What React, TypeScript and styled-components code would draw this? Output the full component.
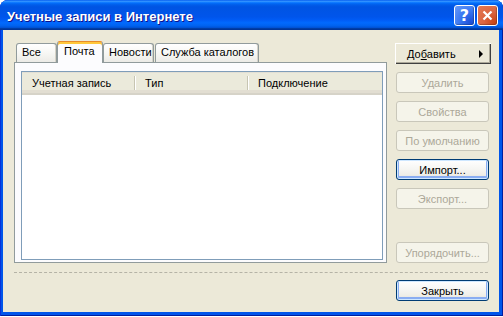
import * as React from 'react';
import styled, { createGlobalStyle } from 'styled-components';

const GlobalStyle = createGlobalStyle`
  html, body {
    margin: 0;
    padding: 0;
    background: #ffffff;
  }
  body {
    font-family: 'Liberation Sans', Tahoma, sans-serif;
    font-size: 11px;
  }
`;

const Window = styled.div`
  width: 503px;
  height: 316px;
  display: flex;
  flex-direction: column;
  background: #0055ea;
  border-radius: 8px 8px 0 0;
  box-shadow: inset 1px 0 0 #0831d9, inset -1px 0 0 #001ea0, inset 0 -1px 0 #001ea0;
`;

const TitleBar = styled.div`
  height: 30px;
  flex: none;
  display: flex;
  align-items: center;
  padding: 0 5px 0 7px;
  border-radius: 8px 8px 0 0;
  background: linear-gradient(
    180deg,
    #0058ee 0%,
    #3593ff 4%,
    #288eff 6%,
    #127dff 8%,
    #036ffc 10%,
    #0262ee 14%,
    #0057e5 20%,
    #0054e3 24%,
    #0055eb 56%,
    #005bf5 66%,
    #026afe 76%,
    #0062ef 86%,
    #0052d6 92%,
    #0040ab 94%,
    #003092 100%
  );
`;

const Title = styled.span`
  flex: 1;
  color: #ffffff;
  font-family: 'Liberation Sans', 'DejaVu Sans', sans-serif;
  font-weight: bold;
  font-size: 13px;
  text-shadow: 1px 1px #0f1089;
  padding-top: 2px;
`;

const CaptionButton = styled.div<{ $kind: 'help' | 'close' }>`
  width: 21px;
  height: 21px;
  box-sizing: border-box;
  margin-left: 2px;
  border: 1px solid #ffffff;
  border-radius: 3px;
  display: flex;
  align-items: center;
  justify-content: center;
  color: #ffffff;
  font-family: 'DejaVu Sans', sans-serif;
  font-weight: bold;
  font-size: 16px;
  background: ${(p) =>
    p.$kind === 'close'
      ? 'radial-gradient(circle at 85% 85%, #cc4616 0%, #dc6540 45%, #e37a55 100%)'
      : 'radial-gradient(circle at 85% 85%, #1d4fd8 0%, #3a78f2 50%, #6a9bf8 100%)'};
  box-shadow: inset -1px -1px 1px rgba(0, 0, 0, 0.25);
`;

const Client = styled.div`
  flex: 1;
  margin: 0 4px 4px 3px;
  background: #ece9d8;
  padding: 11px 10px 0 11px;
  display: flex;
  flex-direction: column;
`;

const TopRow = styled.div`
  height: 222px;
  display: flex;
  gap: 9px;
`;

const TabArea = styled.div`
  width: 373px;
  display: flex;
  flex-direction: column;
`;

const TabStrip = styled.div`
  height: 21px;
  display: flex;
  align-items: flex-end;
  padding-left: 2px;
  position: relative;
  z-index: 1;
`;

const Tab = styled.div<{ $w: number; $active?: boolean; $gap?: number }>`
  box-sizing: border-box;
  width: ${(p) => p.$w}px;
  height: ${(p) => (p.$active ? 22 : 19)}px;
  margin-left: ${(p) => p.$gap ?? 0}px;
  margin-bottom: ${(p) => (p.$active ? -1 : 0)}px;
  border: 1px solid #919b9c;
  border-bottom: none;
  border-radius: 3px 3px 0 0;
  padding: ${(p) => (p.$active ? '3px 0 0 6px' : '2px 0 0 5px')};
  color: #000000;
  white-space: nowrap;
  background: ${(p) =>
    p.$active ? '#fcfcfe' : 'linear-gradient(180deg, #ffffff 0%, #f7f7f4 50%, #ecebe6 100%)'};
  box-shadow: ${(p) =>
    p.$active ? 'inset 0 2px 0 #ffc83c, inset 0 1px 0 #e68b2c' : 'inset -1px 0 0 #d6d3c8'};
  border-top-color: ${(p) => (p.$active ? '#e68b2c' : '#919b9c')};
`;

const Panel = styled.div`
  flex: 1;
  box-sizing: border-box;
  border: 1px solid #919b9c;
  background: #fcfcfe;
  padding: 8px 3px 2px 6px;
  display: flex;
`;

const ListView = styled.div`
  flex: 1;
  border: 1px solid #7f9db9;
  background: #ffffff;
  display: flex;
  flex-direction: column;
`;

const Header = styled.div`
  height: 21px;
  display: flex;
  background: #ebeadb;
  border-bottom: 2px solid #d6d3c8;
  box-shadow: 0 1px 0 #e2dfd4 inset, 0 -3px 0 #e2ded2 inset;
`;

const HeaderCell = styled.div<{ $w?: number }>`
  box-sizing: border-box;
  ${(p) => (p.$w ? `width: ${p.$w}px;` : 'flex: 1;')}
  position: relative;
  padding: 5px 0 0 10px;
  color: #000000;
  white-space: nowrap;

  &::after {
    content: '';
    display: ${(p) => (p.$w ? 'block' : 'none')};
    position: absolute;
    right: 0;
    top: 4px;
    height: 14px;
    width: 1px;
    background: #c7c5b2;
    box-shadow: 1px 0 0 #ffffff;
  }
`;

const ButtonColumn = styled.div`
  width: 93px;
  padding-top: 2px;
  display: flex;
  flex-direction: column;
  gap: 8px;
`;

const Button = styled.button<{ $default?: boolean }>`
  box-sizing: border-box;
  width: 93px;
  height: 21px;
  padding: 0;
  font-family: 'Liberation Sans', Tahoma, sans-serif;
  font-size: 11px;
  color: #000000;
  border: 1px solid #003c74;
  border-radius: 3px;
  background: linear-gradient(180deg, #ffffff 0%, #f6f6f3 45%, #eeede7 80%, #d8d2c6 100%);
  box-shadow: ${(p) =>
    p.$default ? 'inset 0 0 0 1px #cee7ff, inset 0 -1px 0 2px #8aadf2' : 'none'};

  &:disabled {
    border-color: #c9c7ba;
    color: #aca899;
    background: #f5f4ea;
    box-shadow: none;
  }
`;

const PushButton = styled.div`
  box-sizing: border-box;
  width: 96px;
  height: 21px;
  margin-left: -1px;
  display: flex;
  align-items: center;
  justify-content: space-between;
  padding: 0 8px 0 12px;
  background: #ece9d8;
  color: #000000;
  box-shadow: inset 1px 1px 0 #ffffff, inset -1px -1px 0 #404040, inset -2px -2px 0 #aca899;

  u {
    text-decoration: underline;
  }
`;

const Arrow = styled.span`
  width: 0;
  height: 0;
  border-top: 4px solid transparent;
  border-bottom: 4px solid transparent;
  border-left: 4px solid #000000;
`;

const Spacer = styled.div`
  flex: 1;
  margin-top: -8px;
`;

const Separator = styled.div`
  margin: 9px 1px 0 0;
  height: 0;
  border-top: 1px dashed #b5b3a6;
`;

const BottomButton = styled(Button)`
  margin-top: 7px;
  align-self: flex-end;
`;

const App: React.FC = () => {
  return (
    <>
      <GlobalStyle />
      <Window>
        <TitleBar>
          <Title>Учетные записи в Интернете</Title>
          <CaptionButton $kind="help">?</CaptionButton>
          <CaptionButton $kind="close">
            <svg width="11" height="11" viewBox="0 0 11 11">
              <path d="M1.5 1.5 L9.5 9.5 M9.5 1.5 L1.5 9.5" stroke="#ffffff" strokeWidth="2.2" />
            </svg>
          </CaptionButton>
        </TitleBar>
        <Client>
          <TopRow>
            <TabArea>
              <TabStrip>
                <Tab $w={41}>Все</Tab>
                <Tab $w={46} $active>
                  Почта
                </Tab>
                <Tab $w={51}>Новости</Tab>
                <Tab $w={104} $gap={1}>
                  Служба каталогов
                </Tab>
              </TabStrip>
              <Panel>
                <ListView>
                  <Header>
                    <HeaderCell $w={113}>Учетная запись</HeaderCell>
                    <HeaderCell $w={113}>Тип</HeaderCell>
                    <HeaderCell>Подключение</HeaderCell>
                  </Header>
                </ListView>
              </Panel>
            </TabArea>
            <ButtonColumn>
              <PushButton>
                <span>
                  До<u>б</u>авить
                </span>
                <Arrow />
              </PushButton>
              <Button disabled>Удалить</Button>
              <Button disabled>Свойства</Button>
              <Button disabled>По умолчанию</Button>
              <Button $default>Импорт...</Button>
              <Button disabled>Экспорт...</Button>
              <Spacer />
              <Button disabled>Упорядочить...</Button>
            </ButtonColumn>
          </TopRow>
          <Separator />
          <BottomButton $default>Закрыть</BottomButton>
        </Client>
      </Window>
    </>
  );
};

export default App;
